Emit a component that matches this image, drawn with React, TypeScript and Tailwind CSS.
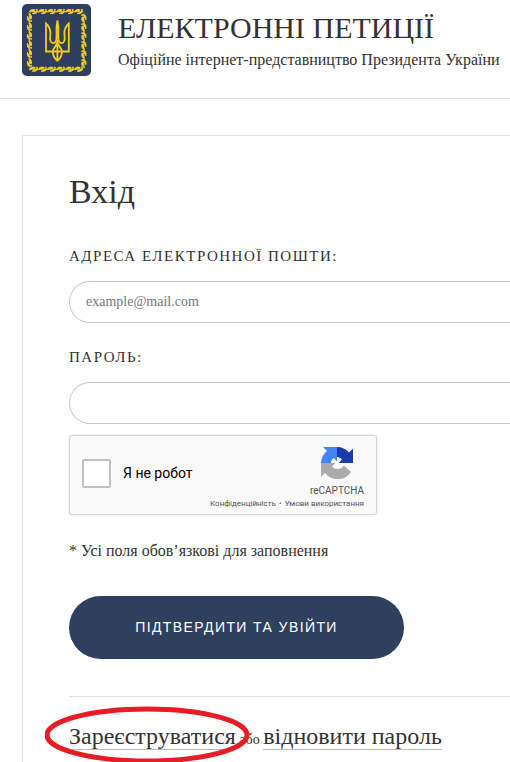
import React from "react";

const serif = "font-['Liberation_Serif',serif]";

const horizontalLeaves = [12, 21, 30, 39, 48, 57];
const verticalLeaves = [14, 23, 32, 41, 50, 59];

function Emblem() {
  return (
    <svg viewBox="0 0 69 72" className="h-[72px] w-[69px] shrink-0" aria-hidden="true">
      <defs>
        <g id="leaf" stroke="#f0cd1b" strokeWidth="1" strokeLinejoin="round">
          <path d="M-4.6.4C-3.8-2-1.8-2.6.8-2L.4-.2C-1.4-.4-3 0-4.6.4Z" />
          <path d="M-1.8 1.8C.5 2.4 3 1.8 4-.6L1.4-.2C.6.8-.6 1.4-1.8 1.8Z" />
          <circle cx="2.8" cy="-1.8" r=".6" />
        </g>
      </defs>
      <rect width="69" height="72" rx="5" fill="#2f405f" />
      <g fill="#f0cd1b">
        {horizontalLeaves.map((x) => (
          <React.Fragment key={x}>
            <use href="#leaf" transform={`translate(${x} 7.7)`} />
            <use href="#leaf" transform={`translate(${x} 65.3)`} />
          </React.Fragment>
        ))}
        {verticalLeaves.map((y) => (
          <React.Fragment key={y}>
            <use href="#leaf" transform={`translate(7.3 ${y}) rotate(90)`} />
            <use href="#leaf" transform={`translate(62 ${y}) rotate(-90)`} />
          </React.Fragment>
        ))}
      </g>
      <g fill="none" stroke="#f5cc16" strokeWidth="1.8" strokeLinejoin="miter">
        <path d="M24 19.5V47.5H46.8V19.5C42.5 23 42 27 42.5 31.5C43.2 36 42.6 38.5 39.8 39.2C37 39 36 36 36.3 32C36.6 27 36.4 21 35.4 16.5C34.4 21 34.2 27 34.5 32C34.8 36 33.8 39 31 39.2C28.2 38.5 27.6 36 28.3 31.5C28.8 27 28.3 23 24 19.5Z" />
        <path d="M35.4 36V57M35.4 57C32 54 30.8 50 30.8 47.5C30.8 44 34.5 43 35.4 38C36.3 43 40 44 40 47.5C40 50 38.8 54 35.4 57" />
      </g>
    </svg>
  );
}

function CaptchaLogo() {
  return (
    <svg viewBox="0 0 64 64" className="size-8" aria-hidden="true">
      <path fill="#1c3aa9" d="M64 32V3l-8 8A32 32 0 0 0 32 0v20c4 .2 7.4 1.8 9.8 5L35.4 32Z" />
      <path fill="#4285f4" d="M32 0H4l8 8A32 32 0 0 0 0 32h20c.2-4 1.8-7.4 5-9.8L32 28.6Z" />
      <path fill="#ababab" d="M0 32v28l8-8A32 32 0 0 0 60 50L45.6 37A14 14 0 0 1 32 44c-4-.2-7.4-1.8-9.8-5L28.6 32Z" />
    </svg>
  );
}

const label = "block text-[15px] leading-6 tracking-widest uppercase text-[#333]";
const field =
  "block h-[42px] w-full rounded-l-full border border-r-0 border-[#c5c8d3] bg-white px-4 text-[14px] text-[#333] outline-none placeholder:text-[#777]";
const link = "inline-block border-b border-[#bbb] text-[24px] leading-[26px]";

export default function App() {
  return (
    <div className={`${serif} flex min-h-screen flex-col overflow-hidden bg-white text-[#333]`}>
      <header className="flex h-[99px] items-start gap-[27px] border-b border-[#e2e2e2] pt-1 pl-[22px]">
        <Emblem />
        <div className="whitespace-nowrap pt-1">
          <div className="text-[30px] leading-10">ЕЛЕКТРОННІ ПЕТИЦІЇ</div>
          <div className="text-[16px] leading-6">Офіційне інтернет-представництво Президента України</div>
        </div>
      </header>
      <main className="mt-9 ml-[22px] flex-1 border-t border-l border-[#e2e2e2] pt-8 pl-[46px]">
        <h1 className="text-[34px] leading-[48px]">Вхід</h1>
        <form className="mt-7" onSubmit={(e) => e.preventDefault()}>
          <label htmlFor="email" className={label}>Адреса електронної пошти:</label>
          <input id="email" type="email" placeholder="example@mail.com" className={`${field} mt-[13px]`} />
          <label htmlFor="password" className={`${label} mt-[22px]`}>Пароль:</label>
          <input id="password" type="password" className={`${field} mt-[13px]`} />
          <div className="mt-[11px] flex h-20 w-[308px] justify-between rounded-[3px] border border-[#d3d3d3] bg-[#f9f9f9] px-3 font-[Roboto,sans-serif] shadow-[0_0_3px_rgba(0,0,0,0.1)]">
            <div className="flex items-center gap-3 pb-1">
              <input id="robot" type="checkbox" className="size-[29px] appearance-none rounded-[2px] border-2 border-[#c1c1c1] bg-white" />
              <label htmlFor="robot" className="text-[14px] whitespace-nowrap text-black">Я не робот</label>
            </div>
            <div className="-ml-24 flex flex-col items-end pt-[11px] text-[#555]">
              <div className="flex flex-col items-center self-end">
                <CaptchaLogo />
                <span className="mt-1 text-[10px] leading-4">reCAPTCHA</span>
              </div>
              <div className="flex gap-[3px] text-[8px] leading-[10px] whitespace-nowrap">
                <a href="#privacy">Конфіденційність</a>
                <span>•</span>
                <a href="#terms">Умови використання</a>
              </div>
            </div>
          </div>
          <p className="mt-6 text-[16px] leading-6">* Усі поля обов’язкові для заповнення</p>
          <button type="submit" className="mt-[33px] block h-[63px] w-[335px] rounded-full bg-[#2f405f] font-['Liberation_Sans',sans-serif] text-[14px] tracking-widest text-white uppercase">
            Підтвердити та увійти
          </button>
        </form>
        <div className="mt-[37px] border-t border-[#e2e2e2] pt-[26px] text-[14px] leading-[26px] whitespace-nowrap">
          <span className="relative inline-block">
            <a href="#register" className={link}>Зареєструватися</a>
            <svg viewBox="0 0 206 60" className="pointer-events-none absolute -top-[18px] -left-6 h-[60px] w-[206px] max-w-none" aria-hidden="true">
              <ellipse cx="102" cy="30" rx="100" ry="26" fill="none" stroke="#e81c24" strokeWidth="5" />
            </svg>
          </span>{" "}
          або{" "}
          <a href="#restore" className={link}>відновити пароль</a>
        </div>
      </main>
    </div>
  );
}
